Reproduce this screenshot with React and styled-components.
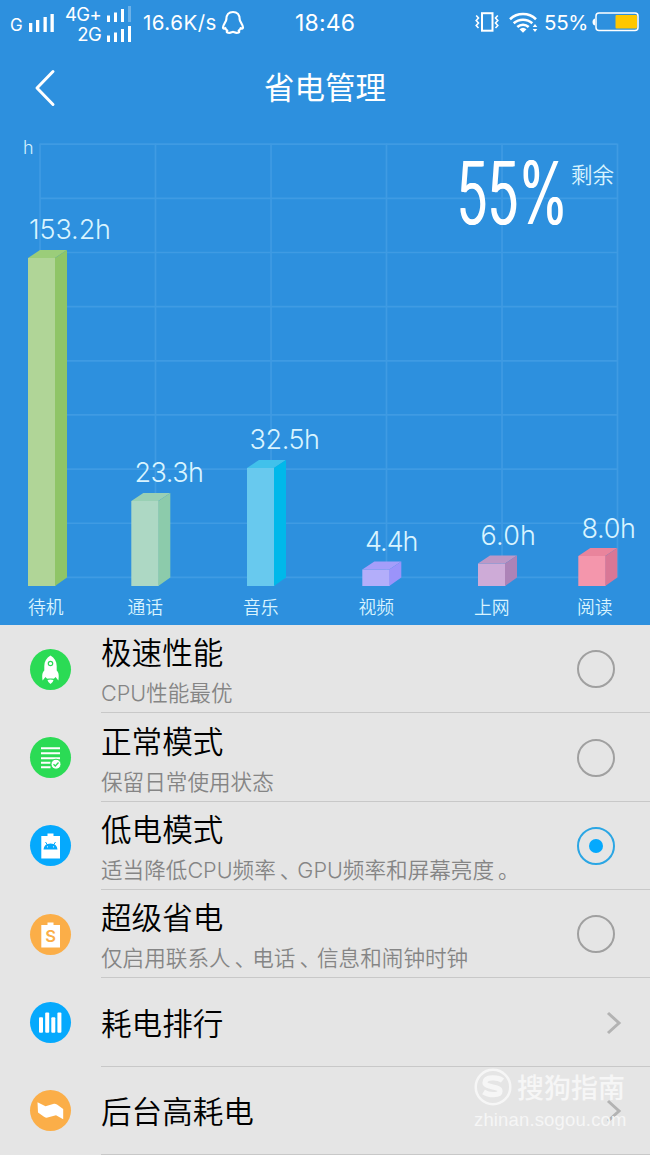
import React, { useState } from "react";
import styled, { createGlobalStyle } from "styled-components";

const bars = [
  { name: "待机", value: "153.2h", x: 28, top: 258, label: [29, 238.5, 82], nameX: 28, front: "#b0d597", side: "#8fc567", lid: "#9bcd7a" },
  { name: "通话", value: "23.3h", x: 131.3, top: 501, label: [134.5, 481.5, 69.5], nameX: 127.5, front: "#add8c4", side: "#8ccbab", lid: "#99d0b4" },
  { name: "音乐", value: "32.5h", x: 247, top: 468, label: [249.5, 448.5, 70.5], nameX: 243, front: "#68c9ee", side: "#00b8ea", lid: "#41c1eb" },
  { name: "视频", value: "4.4h", x: 362.3, top: 569.5, label: [365, 550.5, 53.5], nameX: 358.5, front: "#b3aefa", side: "#9b93fa", lid: "#a59efa" },
  { name: "上网", value: "6.0h", x: 478, top: 563.5, label: [480.5, 544.5, 55.5], nameX: 474, front: "#ceabd7", side: "#ad83b7", lid: "#bd98c6" },
  { name: "阅读", value: "8.0h", x: 578.3, top: 556, label: [581.5, 537.5, 54.5], nameX: 577, front: "#f496ac", side: "#d97796", lid: "#e9849c" },
];

const modes = [
  { id: "fast", title: "极速性能", text: "CPU性能最优", color: "#2bdb55", icon: <RocketIcon /> },
  { id: "normal", title: "正常模式", text: "保留日常使用状态", color: "#2bdb55", icon: <ListIcon /> },
  { id: "low", title: "低电模式", text: "适当降低CPU频率、GPU频率和屏幕亮度。", color: "#05a9fd", icon: <AndroidIcon /> },
  { id: "super", title: "超级省电", text: "仅启用联系人、电话、信息和闹钟时钟", color: "#fbae48", icon: <SaverIcon /> },
];

const links = [
  { title: "耗电排行", color: "#05a9fd", icon: <RankIcon /> },
  { title: "后台高耗电", color: "#fbae48", icon: <WaveIcon /> },
];

export default function App() {
  const [mode, setMode] = useState("low");

  return (
    <Screen>
      <GlobalStyle />
      <StatusBar />
      <TitleBar>
        <BackButton aria-label="返回">
          <svg width="22" height="38" viewBox="0 0 22 38">
            <path d="M19 2.5 3 19 19 35.5" fill="none" stroke="#fff" strokeWidth="3" strokeLinecap="round" strokeLinejoin="round" />
          </svg>
        </BackButton>
        <h1>省电管理</h1>
      </TitleBar>
      <UsageChart />
      <List>
        {modes.map((m) => (
          <Row key={m.id} onClick={() => setMode(m.id)}>
            <Badge $color={m.color}>{m.icon}</Badge>
            <RowBody>
              <Texts>
                <RowTitle>{m.title}</RowTitle>
                <RowText>
                  {m.text.split(/([、。])/).map((part, i) => (i % 2 ? <Mark key={i}>{part}</Mark> : part))}
                </RowText>
              </Texts>
              <Radio $on={mode === m.id} />
            </RowBody>
          </Row>
        ))}
        {links.map((l) => (
          <Row key={l.title}>
            <Badge $color={l.color}>{l.icon}</Badge>
            <RowBody>
              <RowTitle $single>{l.title}</RowTitle>
              <Chevron viewBox="0 0 16 26">
                <path d="M2 3 13 13 2 23" fill="none" stroke="#b3b3b3" strokeWidth="3" />
              </Chevron>
            </RowBody>
          </Row>
        ))}
      </List>
      <Watermark>
        <div className="brand">
          <svg width="38" height="38" viewBox="0 0 38 38">
            <circle cx="19" cy="19" r="17.3" fill="none" stroke="#f6f6f6" strokeWidth="2.5" />
            <path d="M28.5 12.5C24 9 11 8.500 11 14.500C11 20 26 18 26 23C26 28 15 27.500 9.500 24" fill="none" stroke="#f6f6f6" strokeWidth="5.2" />
          </svg>
          <span>搜狗指南</span>
        </div>
        <div className="site">zhinan.sogou.com</div>
      </Watermark>
    </Screen>
  );
}

function Signal({ faded }) {
  return (
    <svg width="25" height="16" viewBox="0 0 25 16" fill="#fff">
      <rect x="0" y="9.500" width="3" height="6.500" />
      <rect x="7" y="6.500" width="3" height="9.500" />
      <rect x="14" y="3" width="3" height="13" />
      <rect x="21" y="0" width="3" height="16" opacity={faded ? 0.3 : 1} />
    </svg>
  );
}

function StatusBar() {
  return (
    <Status>
      <Carrier>
        <span>G</span>
        <svg width="27" height="19" viewBox="0 0 27 19" fill="#fff">
          <rect x="1" y="9" width="3.300" height="9" />
          <rect x="8" y="6" width="3.300" height="12" />
          <rect x="15.500" y="3" width="3.300" height="15" />
          <rect x="22.500" y="0" width="3.300" height="18" />
        </svg>
      </Carrier>
      <Networks>
        <div>
          <span>4G+</span>
          <Signal faded />
        </div>
        <div>
          <span>2G</span>
          <Signal />
        </div>
      </Networks>
      <Speed>16.6K/s</Speed>
      <svg width="24" height="25" viewBox="0 0 24 25">
        <path
          d="M12 2C7.800 2 5.300 5 5.300 9.500C5.300 11.500 2 14.500 2 17.500C2 19 3.500 19 4.300 18C4.700 19.500 5.500 20 6.300 20.700C5 22.300 6.500 22.800 8.500 22.800C10 22.800 11 21.800 12 21.800C13 21.800 14 22.800 15.500 22.800C17.500 22.800 19 22.300 17.700 20.700C18.500 20 19.300 19.500 19.700 18C20.500 19 22 19 22 17.500C22 14.500 18.700 11.500 18.700 9.500C18.700 5 16.200 2 12 2Z"
          fill="none"
          stroke="#fff"
          strokeWidth="2.200"
          strokeLinejoin="round"
        />
      </svg>
      <Clock>18:46</Clock>
      <Right>
        <svg width="24" height="20" viewBox="0 0 24 20" fill="none" stroke="#fff">
          <rect x="7" y="1.200" width="10.500" height="17.500" strokeWidth="2" />
          <path d="M1.200 3.500 3.500 6 1.200 8.500 3.500 11 1.200 13.500 3.500 16M22.800 3.500 20.500 6 22.800 8.500 20.500 11 22.800 13.500 20.500 16" strokeWidth="1.600" />
        </svg>
        <svg width="29" height="21" viewBox="0 0 29 21" fill="none" stroke="#fff" strokeWidth="2.600">
          <path d="M1 7.200A19 19 0 0 1 27 7.200" />
          <path d="M4.700 11.300A14 14 0 0 1 23.300 11.300" />
          <path d="M8.300 15A8.500 8.500 0 0 1 19.700 15" />
          <path d="M10.500 17.300Q14 14 17.500 17.300L14 20.800Z" fill="#fff" stroke="none" />
          <path d="M23.700 15 26 12 28.300 15ZM23.700 17 26 20 28.300 17Z" fill="#fff" stroke="none" />
        </svg>
        <Percent>55%</Percent>
        <svg width="47" height="20" viewBox="0 0 47 20">
          <path d="M3 6.500V13.500Q.5 13 .5 10T3 6.500Z" fill="#fff" />
          <rect x="4" y="1" width="42" height="17.500" rx="3" fill="none" stroke="#fff" strokeWidth="1.500" />
          <rect x="23.500" y="3" width="21.500" height="13.500" rx="1" fill="#fec700" />
        </svg>
      </Right>
    </Status>
  );
}

function UsageChart() {
  return (
    <ChartPanel>
      <svg width="650" height="505" viewBox="0 120 650 505">
        <g stroke="#3f9be3" strokeWidth="1.700">
          {[0, 1, 2, 3, 4, 5, 6, 7, 8].map((i) => (
            <line key={i} x1="40" x2="617" y1={144.2 + i * 54.15} y2={144.2 + i * 54.15} />
          ))}
          {[0, 1, 2, 3, 4, 5].map((i) => (
            <line key={i} y1="143.500" y2="577.500" x1={40 + i * 115.5} x2={40 + i * 115.5} />
          ))}
        </g>
        <text x="23" y="153.500" fontSize="18" fontWeight="300" fill="#d3f0ff">h</text>
        {bars.map((b) => (
          <g key={b.name}>
            <rect x={b.x} y={b.top} width="27.500" height={586 - b.top} fill={b.front} />
            <path d={`M${b.x} ${b.top}l12-8h27l-12 8z`} fill={b.lid} />
            <path d={`M${b.x + 27} ${b.top}l12-8V577.500l-12 8.500z`} fill={b.side} />
            <text x={b.label[0]} y={b.label[1]} textLength={b.label[2]} fontSize="27" fontWeight="300" fill="#d9f4ff">
              {b.value}
            </text>
            <text x={b.nameX} y="613.800" fontSize="17.800" fontWeight="350" fill="#d9f4ff">
              {b.name}
            </text>
          </g>
        ))}
      </svg>
      <Remaining>
        <strong>
          <span>55%</span>
        </strong>
        <em>剩余</em>
      </Remaining>
    </ChartPanel>
  );
}

function RocketIcon() {
  return (
    <svg viewBox="0 0 41 41" fill="#fff">
      <path d="M20.500 6.500C16.500 9 14.300 12.500 14.300 17V21.500C12.300 23.500 11.800 26 12.600 31.500L15.500 28Q17 30.500 18.500 29.500H22.500Q24 30.500 25.500 28L28.400 31.500C29.200 26 28.700 23.500 26.700 21.500V17C26.700 12.500 24.500 9 20.500 6.500Z" />
      <path d="M17.500 31Q20.500 30 23.500 31Q23 33.500 20.500 35Q18 33.500 17.500 31Z" />
      <circle cx="20.500" cy="14.500" r="2.200" fill="none" stroke="#2bdb55" strokeWidth="1.200" />
    </svg>
  );
}

function ListIcon() {
  return (
    <svg viewBox="0 0 41 41">
      <path d="M11 11.200H30M11 16.200H30M11 21.200H30M11 25.800H20.500M11 30.300H20.500" stroke="#fff" strokeWidth="2" />
      <circle cx="26" cy="27.200" r="5" fill="#fff" stroke="#2bdb55" strokeWidth="1" />
      <path d="M23.500 27.200 25.300 29 28.500 25.500" fill="none" stroke="#2bdb55" strokeWidth="1.300" />
    </svg>
  );
}

function AndroidIcon() {
  return (
    <svg viewBox="0 0 41 41">
      <path d="M11.300 11H17.500V8.500H23.500V11H30V33.500H11.300Z" fill="#fff" />
      <path d="M13.500 24.500Q14 18.700 20.500 18.500Q27 18.700 27.500 24.500Z" fill="#05a9fd" />
      <path d="M15.500 17 17.500 20M25.500 17 23.500 20" stroke="#05a9fd" />
      <circle cx="17.500" cy="21.800" r=".6" fill="#fff" />
      <circle cx="23.500" cy="21.800" r=".6" fill="#fff" />
    </svg>
  );
}

function SaverIcon() {
  return (
    <svg viewBox="0 0 41 41">
      <path d="M11.300 11H17.500V8.500H23.500V11H30V33.500H11.300Z" fill="#fff" />
      <text x="20.600" y="28" fontSize="16.500" fontWeight="600" textAnchor="middle" fill="#fbae48">S</text>
    </svg>
  );
}

function RankIcon() {
  return (
    <svg viewBox="0 0 41 41" fill="#fff">
      <rect x="9" y="15.300" width="4" height="15.500" rx="1" />
      <rect x="15.200" y="10.500" width="4" height="20.300" rx="1" />
      <rect x="21.300" y="15.300" width="4" height="15.500" rx="1" />
      <rect x="27.400" y="10.500" width="4" height="20.300" rx="1" />
    </svg>
  );
}

function WaveIcon() {
  return (
    <svg viewBox="0 0 41 41">
      <path d="M7.500 12.300 15.500 16.300 24 13.700Q25.500 13.500 27 14.600L33.200 19V29.300L26 25.300 17.500 27.600Q16 28 14 26.800L8 22.500Z" fill="#fff" />
    </svg>
  );
}

const GlobalStyle = createGlobalStyle`
  * {
    box-sizing: border-box;
  }
  body {
    margin: 0;
    background: #e5e5e5;
    font-family: Inter, "Noto Sans CJK SC", sans-serif;
  }
`;

const Screen = styled.main`
  position: relative;
  width: 650px;
  height: 1155px;
  overflow: hidden;
  background: #e5e5e5;
`;

const Status = styled.header`
  display: flex;
  align-items: center;
  width: 100%;
  height: 46px;
  padding: 0 11px 2px 10px;
  background: #2d90de;
  color: #fff;
  white-space: nowrap;
`;

const Carrier = styled.div`
  display: flex;
  align-items: flex-end;
  width: 55px;
  padding-top: 3px;
  span {
    width: 18px;
    font-size: 17px;
    line-height: 15px;
  }
`;

const Networks = styled.div`
  width: 67px;
  margin-right: 11px;
  padding-top: 3px;
  div {
    display: flex;
    justify-content: flex-end;
    align-items: center;
    gap: 6px;
    height: 20px;
    font-size: 18.5px;
    letter-spacing: -0.7px;
  }
`;

const Speed = styled.div`
  width: 78px;
  font-size: 20.5px;
  letter-spacing: 0.5px;
`;

const Clock = styled.div`
  margin-left: 50px;
  padding-top: 2px;
  font-size: 23px;
  letter-spacing: 0.2px;
`;

const Right = styled.div`
  display: flex;
  align-items: center;
  gap: 10px;
  margin-left: auto;
`;

const Percent = styled.span`
  width: 39px;
  margin: 0 -1px 0 -4px;
  font-size: 20.5px;
  letter-spacing: -0.3px;
`;

const TitleBar = styled.div`
  display: grid;
  grid-template-columns: 90px 1fr 90px;
  align-items: center;
  height: 74px;
  background: #2d90de;
  color: #fff;
  h1 {
    margin: 9px 0 0;
    font-size: 30.5px;
    line-height: 40px;
    font-weight: 400;
    text-align: center;
  }
`;

const BackButton = styled.button`
  display: flex;
  padding: 9px 0 0 34px;
  border: 0;
  background: none;
`;

const ChartPanel = styled.section`
  position: relative;
  height: 505px;
  background: #2d90de;
  svg {
    display: block;
  }
`;

/* floats over the top right cells of the grid */
const Remaining = styled.div`
  position: absolute;
  top: 39px;
  right: 36px;
  display: flex;
  color: #fff;
  strong {
    display: block;
    width: 113px;
    height: 68px;
  }
  strong span {
    display: block;
    width: max-content;
    margin-left: -1px;
    font-size: 86px;
    font-weight: 300;
    line-height: 68px;
    transform: scaleX(0.605);
    transform-origin: 0 0;
    text-shadow: 1.3px 0 #fff, -1.3px 0 #fff;
  }
  em {
    font-style: normal;
    font-size: 21.5px;
    line-height: 32px;
    font-weight: 350;
    color: #d9f4ff;
  }
`;

const List = styled.section`
  display: grid;
  grid-auto-rows: 88.35px;
`;

const Row = styled.div`
  display: flex;
  align-items: center;
  padding-left: 30px;
`;

const Badge = styled.div`
  flex: none;
  width: 41px;
  height: 41px;
  margin-right: 30px;
  border-radius: 50%;
  background: ${(p) => p.$color};
  svg {
    display: block;
    width: 41px;
    height: 41px;
  }
`;

const RowBody = styled.div`
  display: flex;
  flex: 1;
  align-items: center;
  justify-content: space-between;
  height: 100%;
  padding-right: 36px;
  border-bottom: 1.5px solid #c8c8c8;
`;

const Texts = styled.div`
  padding-top: 5px;
  white-space: nowrap;
`;

const RowTitle = styled.div`
  font-size: 30.6px;
  font-weight: 350;
  line-height: 44px;
  color: #000;
  padding-top: ${(p) => (p.$single ? "4px" : 0)};
`;

const RowText = styled.div`
  font-size: 21.6px;
  font-weight: 350;
  line-height: 36px;
  color: #858585;
`;

/* punctuation sits nearer the middle of its cell */
const Mark = styled.span`
  margin-left: 4px;
  letter-spacing: -4px;
`;

const Radio = styled.div`
  display: flex;
  align-items: center;
  justify-content: center;
  width: 38px;
  height: 38px;
  margin: 1px -1px 0 0;
  border: 2px solid ${(p) => (p.$on ? "#2ba6e4" : "#a0a0a0")};
  border-radius: 50%;
  &::after {
    content: "";
    width: 14px;
    height: 14px;
    border-radius: 50%;
    background: ${(p) => (p.$on ? "#05a9fd" : "transparent")};
  }
`;

const Chevron = styled.svg`
  width: 16px;
  height: 26px;
  margin: 2px -8px 0 0;
`;

const Watermark = styled.div`
  position: absolute;
  top: 1067px;
  left: 474px;
  color: #f6f6f6;
  white-space: nowrap;
  .brand {
    display: flex;
    align-items: center;
    gap: 5px;
    height: 39px;
    font-size: 27px;
    font-weight: 500;
  }
  .site {
    font-size: 18.5px;
    line-height: 28px;
    font-family: "Liberation Sans", sans-serif;
    letter-spacing: 0.15px;
  }
`;
